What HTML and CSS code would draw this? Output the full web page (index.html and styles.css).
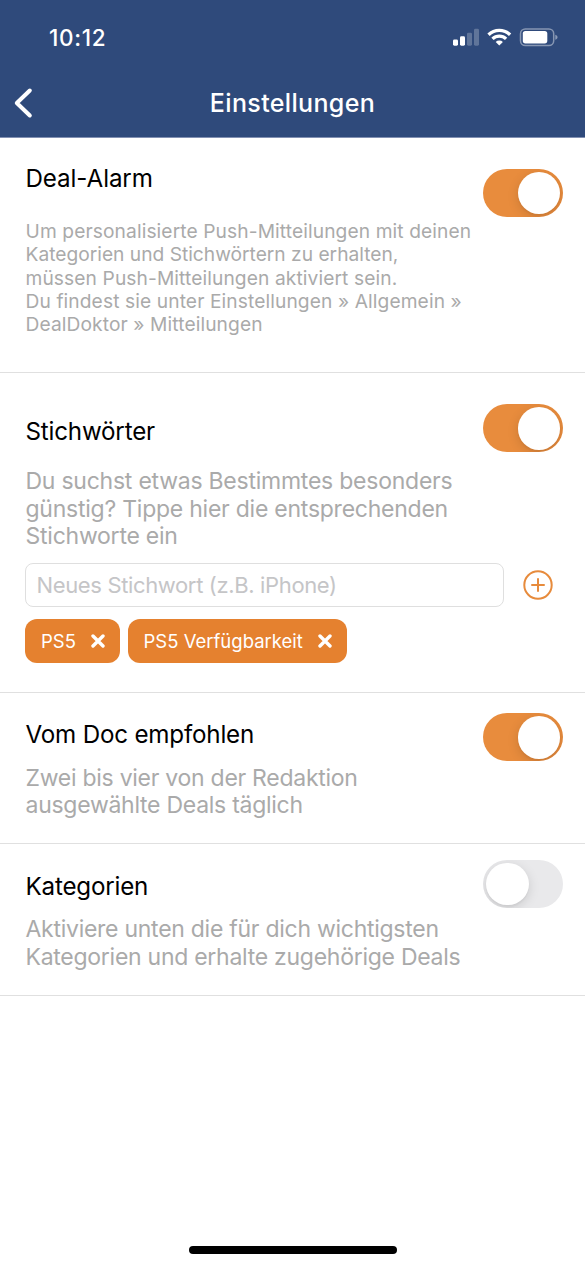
FILE: index.html
```html
<!DOCTYPE html>
<html lang="de">
<head>
<meta charset="utf-8">
<title>Einstellungen</title>
<link rel="stylesheet" href="styles.css">
</head>
<body>
<div class="screen">
  <header class="header">
    <div class="status">
      <span class="time">10:12</span>
      <svg class="status-icons" width="106" height="20" viewBox="0 0 106 20">
        <g fill="#fff">
          <rect x="0" y="11.5" width="5" height="6.2" rx="1.4"/>
          <rect x="7" y="8.3" width="5" height="9.4" rx="1.4"/>
          <rect x="14" y="4.7" width="5" height="13" rx="1.4" opacity=".24"/>
          <rect x="21" y="0.8" width="5" height="16.9" rx="1.4" opacity=".24"/>
          <path d="M46.3 17.6l-3.6-3.6a5.3 5.3 0 0 1 7.2 0z"/>
          <rect x="69.8" y="3" width="24.5" height="12.4" rx="2.6"/>
          <path d="M102.3 6.8c1.8.7 2.2 1.6 2.2 2.5s-.4 1.8-2.2 2.5z" opacity=".45"/>
        </g>
        <g fill="none" stroke="#fff" stroke-width="3.3">
          <path d="M35.5 6.7a15.6 15.6 0 0 1 21.6 0"/>
          <path d="M39.5 10.9a9.8 9.8 0 0 1 13.6 0"/>
          <rect x="67.5" y="0.9" width="33.2" height="16.7" rx="4.8" stroke-width="1.5" opacity=".42"/>
        </g>
      </svg>
    </div>
    <div class="nav">
      <svg class="back" width="20" height="32" viewBox="0 0 20 32" fill="none" stroke="#fff" stroke-width="4" stroke-linecap="round" stroke-linejoin="round"><path d="M16.8 3.5L3.8 16l13 12.5"/></svg>
      <h1 class="nav-title">Einstellungen</h1>
    </div>
  </header>

  <main>
    <section class="setting alarm">
      <div class="copy">
        <h2 class="title">Deal-Alarm</h2>
        <p class="note">Um personalisierte Push-Mitteilungen mit deinen<br><span class="tight">Kategorien und Stichwörtern zu erhalten,</span><br>müssen Push-Mitteilungen aktiviert sein.<br>Du findest sie unter Einstellungen » Allgemein »<br>DealDoktor » Mitteilungen</p>
      </div>
      <div class="toggle on"><span class="knob"></span></div>
    </section>

    <section class="setting keywords">
      <div class="copy">
        <h2 class="title">Stichwörter</h2>
        <p class="desc">Du suchst etwas Bestimmtes besonders<br>günstig? Tippe hier die entsprechenden<br>Stichworte ein</p>
      </div>
      <div class="toggle on"><span class="knob"></span></div>
      <div class="entry">
        <div class="field">Neues Stichwort (z.B. iPhone)</div>
        <svg class="add" width="30" height="30" viewBox="0 0 30 30" fill="none" stroke="#e78b3c" stroke-width="2" stroke-linecap="round"><circle cx="15" cy="15" r="13.7"/><path d="M9 15h12M15 9v12"/></svg>
      </div>
      <div class="chips">
        <span class="chip chip-short">PS5 <svg class="x" width="14" height="14" viewBox="0 0 14 14"><path d="M2 2l10 10M12 2L2 12"/></svg></span>
        <span class="chip">PS5 Verfügbarkeit <svg class="x" width="14" height="14" viewBox="0 0 14 14"><path d="M2 2l10 10M12 2L2 12"/></svg></span>
      </div>
    </section>

    <section class="setting doc">
      <div class="copy">
        <h2 class="title">Vom Doc empfohlen</h2>
        <p class="desc">Zwei bis vier von der Redaktion<br>ausgewählte Deals täglich</p>
      </div>
      <div class="toggle on"><span class="knob"></span></div>
    </section>

    <section class="setting categories">
      <div class="copy">
        <h2 class="title">Kategorien</h2>
        <p class="desc">Aktiviere unten die für dich wichtigsten<br>Kategorien und erhalte zugehörige Deals</p>
      </div>
      <div class="toggle"><span class="knob"></span></div>
    </section>
  </main>
  <div class="home"></div>
</div>
</body>
</html>
```
FILE: styles.css
```css
* { box-sizing: border-box; }
body { margin: 0; background: #fff; font-family: Inter, "Liberation Sans", sans-serif; }
h1, h2, p { margin: 0; font-weight: 400; white-space: nowrap; }
svg { display: block; flex: none; }
.screen { width: 585px; height: 1266px; display: flex; flex-direction: column; overflow: hidden; }

.header { height: 138px; flex: none; background: #2f4a7b; color: #fff; border-bottom: 1px solid #8290b2; }
.status { height: 70px; display: flex; justify-content: space-between; align-items: flex-start; padding: 23px 26px 0 49px; }
.time { font-size: 22.5px; line-height: 30px; font-weight: 550; letter-spacing: 0.7px; }
.status-icons { margin-top: 5px; }
.nav { height: 66px; display: grid; grid-template-columns: 80px 1fr 80px; align-items: center; }
.back { margin-left: 13px; }
.nav-title { text-align: center; font-size: 25px; line-height: 30px; font-weight: 550; letter-spacing: 0.35px; }

.setting { display: grid; grid-template-columns: 1fr 80px; padding: 0 22px 0 25.5px; border-bottom: 1px solid #e0e0e0; }
.alarm { height: 235px; }
.keywords { height: 320px; align-content: start; }
.doc { height: 151px; }
.categories { height: 152px; }
.alarm .copy { padding-top: 26px; }
.keywords .copy { padding-top: 44px; }
.doc .copy { padding-top: 27px; }
.categories .copy { padding-top: 27.5px; }
.alarm .toggle { margin-top: 30.5px; }
.keywords .toggle { margin-top: 31px; }
.doc .toggle { margin-top: 20px; }
.categories .toggle { margin-top: 15.5px; }

.title { font-size: 24.2px; line-height: 30px; color: #000; letter-spacing: -0.2px; }
.alarm .title { letter-spacing: -0.1px; }
.note { margin-top: 26px; font-size: 19.2px; line-height: 23.3px; letter-spacing: 0.1px; color: #aaa; }
.tight { letter-spacing: 0; }
.desc { margin-top: 14.5px; font-size: 23px; line-height: 27.7px; letter-spacing: -0.27px; color: #aaa; }
.keywords .desc { margin-top: 21px; letter-spacing: -0.24px; }

.toggle { width: 80px; height: 48px; border-radius: 24px; background: #e9e9eb; padding: 3px; display: flex; overflow: hidden; }
.toggle.on { background: #e88c3d; justify-content: flex-end; }
.knob { width: 42.5px; height: 42.5px; border-radius: 50%; background: #fff; box-shadow: 0 3px 12px rgba(0, 0, 0, .13), 0 2px 2px rgba(0, 0, 0, .04); }

.entry { grid-column: 1 / -1; margin: 12px 0 0 -0.5px; display: flex; align-items: center; gap: 19px; }
.field { width: 478.5px; height: 44px; border: 1px solid #dfdfdf; border-radius: 8px; padding-left: 10.5px; font-size: 22px; line-height: 42px; letter-spacing: -0.36px; color: #c5c5c7; white-space: nowrap; }
.chips { grid-column: 1 / -1; margin: 12px 0 0 -0.5px; display: flex; gap: 8px; }
.chip { width: 219.5px; height: 43.5px; border-radius: 12px; background: #e5812f; color: #fff; padding: 0 15px 0 16px; display: flex; align-items: center; justify-content: space-between; font-size: 18.5px; white-space: nowrap; }
.chip-short { width: 94.5px; }
.x path { stroke: #fff; stroke-width: 3.4; stroke-linecap: round; fill: none; }

.home { width: 208px; height: 8px; border-radius: 4px; background: #000; margin: auto 188px 12px 189px; }
```
